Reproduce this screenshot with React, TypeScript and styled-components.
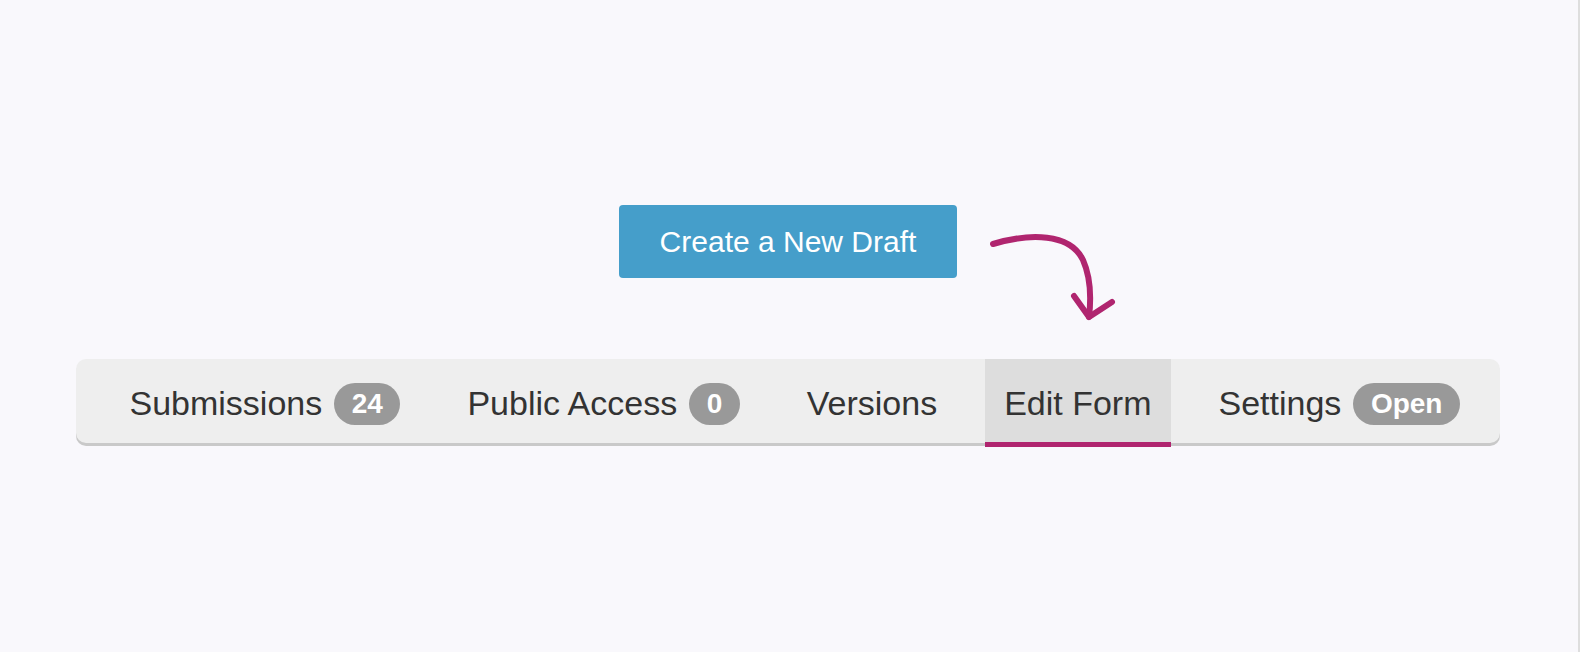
import React from "react";
import styled, { createGlobalStyle, css } from "styled-components";

const GlobalStyle = createGlobalStyle`
  html, body {
    margin: 0;
    padding: 0;
    background: #f9f8fc;
  }
  body {
    font-family: "Liberation Sans", Arial, Helvetica, sans-serif;
    color: #333333;
  }
  * { box-sizing: border-box; }
`;

const Page = styled.div`
  min-height: 100vh;
  border-right: 2px solid #dedede;
  padding: 205px 78px 0 76px;
  display: flex;
  flex-direction: column;
  align-items: center;
`;

const ActionArea = styled.div`
  position: relative;
  margin-bottom: 81px;
`;

const PrimaryButton = styled.button`
  display: block;
  height: 73px;
  padding: 0 41px;
  border: none;
  border-radius: 4px;
  background: #459eca;
  color: #ffffff;
  font-family: "Liberation Sans", Arial, Helvetica, sans-serif;
  font-size: 30px;
  font-weight: 400;
  line-height: 1;
  cursor: pointer;
`;

const ArrowMark = styled.svg`
  position: absolute;
  left: calc(100% + 28px);
  top: 23px;
  width: 135px;
  height: 100px;
  overflow: visible;
`;

const TabBar = styled.nav`
  align-self: stretch;
  height: 84px;
  display: flex;
  align-items: stretch;
  gap: 28px;
  padding-left: 34px;
  background: #eeeeee;
  border-radius: 10px;
  box-shadow: 0 3px 0 #c9c9c9;
`;

const Tab = styled.div<{ $active?: boolean }>`
  display: flex;
  align-items: center;
  gap: 12px;
  padding: 5px 19.5px 0;
  font-size: 34px;
  color: #333333;
  white-space: nowrap;
  cursor: pointer;
  ${(p) =>
    p.$active &&
    css`
      background: #dddddd;
      border-bottom: 5px solid #b0256f;
      margin-bottom: -4px;
    `}
`;

const Badge = styled.span`
  display: inline-flex;
  align-items: center;
  justify-content: center;
  height: 42px;
  padding: 0 17.5px;
  border-radius: 21px;
  background: #999999;
  color: #ffffff;
  font-size: 28px;
  font-weight: 700;
  line-height: 1;
`;

const tabs: { label: string; badge?: string; active?: boolean }[] = [
  { label: "Submissions", badge: "24" },
  { label: "Public Access", badge: "0" },
  { label: "Versions" },
  { label: "Edit Form", active: true },
  { label: "Settings", badge: "Open" },
];

export default function App() {
  return (
    <>
      <GlobalStyle />
      <Page>
        <ActionArea>
          <PrimaryButton>Create a New Draft</PrimaryButton>
          <ArrowMark viewBox="0 0 135 100" aria-hidden="true">
            <path
              d="M8 16 C 45 5, 85 5, 98 32 C 106 50, 106 72, 104 89"
              fill="none"
              stroke="#b0256f"
              strokeWidth="6"
              strokeLinecap="round"
            />
            <path
              d="M89 68 L104 89 L127 74"
              fill="none"
              stroke="#b0256f"
              strokeWidth="6"
              strokeLinecap="round"
              strokeLinejoin="round"
            />
          </ArrowMark>
        </ActionArea>
        <TabBar>
          {tabs.map((t) => (
            <Tab key={t.label} $active={t.active}>
              {t.label}
              {t.badge && <Badge>{t.badge}</Badge>}
            </Tab>
          ))}
        </TabBar>
      </Page>
    </>
  );
}
